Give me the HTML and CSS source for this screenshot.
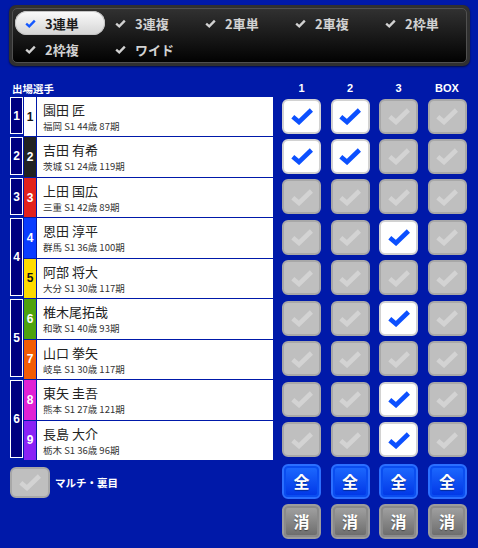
FILE: index.html
```html
<html>
	<head>
		<title>投票 - 選手選択</title>
		<meta charset="utf-8">
		<link rel="stylesheet" href="styles.css">
	</head>
	<body>
	<svg class="defs" width="0" height="0">
		<symbol id="tick-sm" viewBox="0 0 12 10"><polyline points="1.2,5.2 4.6,8.2 10.8,1.8" fill="none" stroke="currentColor" stroke-width="2.6"/></symbol>
		<symbol id="tick" viewBox="0 0 22 18"><polyline points="1.8,9.8 8,15 20.4,3" fill="none" stroke="currentColor" stroke-width="4.6"/></symbol>
	</svg>

	<div class="bet-types">
		<div class="bet-types-inner">
			<div class="bet-type selected"><svg class="tick-sm"><use href="#tick-sm"/></svg>3連単</div>
			<div class="bet-type"><svg class="tick-sm"><use href="#tick-sm"/></svg>3連複</div>
			<div class="bet-type"><svg class="tick-sm"><use href="#tick-sm"/></svg>2車単</div>
			<div class="bet-type"><svg class="tick-sm"><use href="#tick-sm"/></svg>2車複</div>
			<div class="bet-type"><svg class="tick-sm"><use href="#tick-sm"/></svg>2枠単</div>
			<div class="bet-type"><svg class="tick-sm"><use href="#tick-sm"/></svg>2枠複</div>
			<div class="bet-type"><svg class="tick-sm"><use href="#tick-sm"/></svg>ワイド</div>
		</div>
	</div>

	<div class="heads">
		<div class="heads-left">出場選手</div>
		<div class="col-heads"><span>1</span><span>2</span><span>3</span><span>BOX</span></div>
	</div>

	<div class="main">
		<div class="racers">
			<div class="waku" style="grid-row: 1 / span 1">1</div>
			<div class="car car1">1</div>
			<div class="name"><b>園田 匠</b><small>福岡 S1 44歳 87期</small></div>

			<div class="waku" style="grid-row: 2 / span 1">2</div>
			<div class="car car2">2</div>
			<div class="name"><b>吉田 有希</b><small>茨城 S1 24歳 119期</small></div>

			<div class="waku" style="grid-row: 3 / span 1">3</div>
			<div class="car car3">3</div>
			<div class="name"><b>上田 国広</b><small>三重 S1 42歳 89期</small></div>

			<div class="waku" style="grid-row: 4 / span 2">4</div>
			<div class="car car4">4</div>
			<div class="name"><b>恩田 淳平</b><small>群馬 S1 36歳 100期</small></div>
			<div class="car car5">5</div>
			<div class="name"><b>阿部 将大</b><small>大分 S1 30歳 117期</small></div>

			<div class="waku" style="grid-row: 6 / span 2">5</div>
			<div class="car car6">6</div>
			<div class="name"><b>椎木尾拓哉</b><small>和歌 S1 40歳 93期</small></div>
			<div class="car car7">7</div>
			<div class="name"><b>山口 拳矢</b><small>岐阜 S1 30歳 117期</small></div>

			<div class="waku" style="grid-row: 8 / span 2">6</div>
			<div class="car car8">8</div>
			<div class="name"><b>東矢 圭吾</b><small>熊本 S1 27歳 121期</small></div>
			<div class="car car9">9</div>
			<div class="name"><b>長島 大介</b><small>栃木 S1 36歳 96期</small></div>
		</div>

		<div class="marks">
			<!-- 1 -->
			<div class="mark on"><svg class="tick"><use href="#tick"/></svg></div>
			<div class="mark on"><svg class="tick"><use href="#tick"/></svg></div>
			<div class="mark"><svg class="tick"><use href="#tick"/></svg></div>
			<div class="mark"><svg class="tick"><use href="#tick"/></svg></div>
			<!-- 2 -->
			<div class="mark on"><svg class="tick"><use href="#tick"/></svg></div>
			<div class="mark on"><svg class="tick"><use href="#tick"/></svg></div>
			<div class="mark"><svg class="tick"><use href="#tick"/></svg></div>
			<div class="mark"><svg class="tick"><use href="#tick"/></svg></div>
			<!-- 3 -->
			<div class="mark"><svg class="tick"><use href="#tick"/></svg></div>
			<div class="mark"><svg class="tick"><use href="#tick"/></svg></div>
			<div class="mark"><svg class="tick"><use href="#tick"/></svg></div>
			<div class="mark"><svg class="tick"><use href="#tick"/></svg></div>
			<!-- 4 -->
			<div class="mark"><svg class="tick"><use href="#tick"/></svg></div>
			<div class="mark"><svg class="tick"><use href="#tick"/></svg></div>
			<div class="mark on"><svg class="tick"><use href="#tick"/></svg></div>
			<div class="mark"><svg class="tick"><use href="#tick"/></svg></div>
			<!-- 5 -->
			<div class="mark"><svg class="tick"><use href="#tick"/></svg></div>
			<div class="mark"><svg class="tick"><use href="#tick"/></svg></div>
			<div class="mark"><svg class="tick"><use href="#tick"/></svg></div>
			<div class="mark"><svg class="tick"><use href="#tick"/></svg></div>
			<!-- 6 -->
			<div class="mark"><svg class="tick"><use href="#tick"/></svg></div>
			<div class="mark"><svg class="tick"><use href="#tick"/></svg></div>
			<div class="mark on"><svg class="tick"><use href="#tick"/></svg></div>
			<div class="mark"><svg class="tick"><use href="#tick"/></svg></div>
			<!-- 7 -->
			<div class="mark"><svg class="tick"><use href="#tick"/></svg></div>
			<div class="mark"><svg class="tick"><use href="#tick"/></svg></div>
			<div class="mark"><svg class="tick"><use href="#tick"/></svg></div>
			<div class="mark"><svg class="tick"><use href="#tick"/></svg></div>
			<!-- 8 -->
			<div class="mark"><svg class="tick"><use href="#tick"/></svg></div>
			<div class="mark"><svg class="tick"><use href="#tick"/></svg></div>
			<div class="mark on"><svg class="tick"><use href="#tick"/></svg></div>
			<div class="mark"><svg class="tick"><use href="#tick"/></svg></div>
			<!-- 9 -->
			<div class="mark"><svg class="tick"><use href="#tick"/></svg></div>
			<div class="mark"><svg class="tick"><use href="#tick"/></svg></div>
			<div class="mark on"><svg class="tick"><use href="#tick"/></svg></div>
			<div class="mark"><svg class="tick"><use href="#tick"/></svg></div>
		</div>
	</div>

	<div class="controls">
		<div class="multi">
			<div class="mark multi-box"><svg class="tick"><use href="#tick"/></svg></div>
			<span>マルチ・裏目</span>
		</div>
		<div class="buttons">
			<div class="btn all">全</div>
			<div class="btn all">全</div>
			<div class="btn all">全</div>
			<div class="btn all">全</div>
			<div class="btn clear">消</div>
			<div class="btn clear">消</div>
			<div class="btn clear">消</div>
			<div class="btn clear">消</div>
		</div>
	</div>

	<p class="foot">▲ ページトップ</p>
	</body>
</html>
```

FILE: styles.css
```css
body {
	background-color: #0019a9;
	color: #fff;
	font: normal 12px "Liberation Sans", "Noto Sans CJK JP", sans-serif;
	height: 548px;
	margin: 0;
	overflow: hidden;
	width: 478px;
}
.defs {
	display: block;
	height: 0;
	position: absolute;
}

/* bet type tabs */
.bet-types {
	background-color: #303030;
	border-radius: 7px;
	box-shadow: 0 1px 2px rgba(0, 0, 0, 0.6);
	margin: 5px 8px 0 9px;
	padding: 3px;
}
.bet-types-inner {
	background: linear-gradient(#313131, #020202);
	border: 1px solid #505050;
	border-radius: 5px;
	display: grid;
	grid-auto-rows: 24px;
	grid-template-columns: repeat(5, 90px);
	padding: 2px 1px 1px 2px;
	row-gap: 2px;
}
.bet-type {
	align-items: center;
	border-radius: 12px;
	color: #d2d2d2;
	display: flex;
	font: bold 13px "Noto Sans CJK JP", sans-serif;
	padding-left: 10px;
}
.tick-sm {
	height: 9px;
	margin-right: 9px;
	width: 11px;
}
.bet-type.selected {
	background: linear-gradient(#fbfbfb, #d4d4d4);
	box-shadow: inset 0 0 0 1px #c4c4c4;
	color: #1c1c1c;
}
.bet-type.selected .tick-sm { color: #1458ff; }

/* headings */
.heads {
	display: flex;
	font-weight: bold;
	height: 14px;
	line-height: 14px;
	margin: 15px 0 2px 0;
	padding-left: 10px;
}
.heads-left {
	font: bold 10.5px "Noto Sans CJK JP", sans-serif;
	padding-left: 2px;
	width: 270px;
}
.col-heads, .marks, .buttons {
	column-gap: 9.5px;
	display: grid;
	grid-template-columns: repeat(4, 39px);
}
.col-heads {
	font-size: 11px;
	text-align: center;
}

/* racers table */
.main {
	display: flex;
	padding-left: 10px;
}
.racers {
	display: grid;
	gap: 1px;
	grid-template-columns: 13px 12px 1fr;
	grid-template-rows: repeat(9, 39.44px);
	width: 263px;
}
.waku {
	align-items: center;
	background-color: #000080;
	border: 1px solid #fff;
	display: flex;
	font-size: 12px;
	font-weight: bold;
	grid-column: 1;
	justify-content: center;
	margin-bottom: 2px;
}
.car {
	align-items: center;
	display: flex;
	font-size: 12px;
	font-weight: bold;
	grid-column: 2;
	justify-content: center;
}
.car1 { background-color: #fff; color: #111; }
.car2 { background-color: #222; }
.car3 { background-color: #e2211c; }
.car4 { background-color: #0a3cff; }
.car5 { background-color: #ffdc00; color: #111; }
.car6 { background-color: #4ea20e; }
.car7 { background-color: #f25c05; }
.car8 { background-color: #e021d4; }
.car9 { background-color: #8a22f5; }
.name {
	background-color: #fff;
	grid-column: 3;
	padding: 5px 0 0 6px;
}
.name b {
	color: #222;
	display: block;
	font: normal 13px "Noto Sans CJK JP", sans-serif;
	line-height: 16px;
}
.name small {
	color: #333;
	display: block;
	font: normal 9.5px "Noto Sans CJK JP", sans-serif;
	line-height: 14px;
	margin-top: 1px;
}

/* check boxes */
.marks {
	grid-template-rows: repeat(9, 39.44px);
	margin-left: 9px;
	row-gap: 1px;
}
.mark {
	align-items: center;
	background-color: #bfbfbf;
	border: 2px solid #a8a8a8;
	border-radius: 6px;
	box-sizing: border-box;
	color: #d3d3d3;
	display: flex;
	height: 35px;
	justify-content: center;
	margin-top: 1.5px;
}
.mark.on {
	background-color: #fff;
	border-color: #d2d2d2;
	color: #0c50ff;
}
.tick {
	height: 18px;
	width: 22px;
}

/* bottom controls */
.controls {
	display: flex;
	margin-top: 4px;
	padding-left: 10px;
}
.multi {
	align-items: center;
	display: flex;
	height: 37px;
	width: 272px;
}
.multi-box {
	height: 31px;
	margin: 0 5px 0 0;
	width: 40px;
}
.multi span {
	font: bold 10.5px "Noto Sans CJK JP", sans-serif;
}
.buttons {
	grid-auto-rows: 35px;
	row-gap: 5px;
}
.btn {
	align-items: center;
	border: 2px solid;
	border-radius: 6px;
	box-sizing: border-box;
	display: flex;
	font: bold 16px "Noto Sans CJK JP", sans-serif;
	justify-content: center;
	text-shadow: 0 1px 1px rgba(0, 0, 0, 0.4);
}
.all {
	background: linear-gradient(#1d6aff, #0035e6);
	border-color: #2b6fff;
	box-shadow: inset 0 0 0 2px #0a4df0;
}
.clear {
	background: linear-gradient(#a3a3a3, #6a6a6a);
	border-color: #9c9c9c;
	box-shadow: inset 0 0 0 2px #8a8a8a;
}
.foot {
	font: bold 12px "Noto Sans CJK JP", sans-serif;
	margin: 6px 0 0 0;
	text-align: center;
}
```
